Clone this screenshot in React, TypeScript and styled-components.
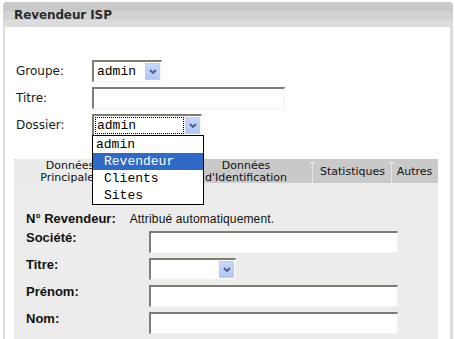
import React from "react";
import styled, { createGlobalStyle } from "styled-components";

const GlobalStyle = createGlobalStyle`
  html, body { margin: 0; padding: 0; background: #fff; }
  body { width: 455px; height: 339px; overflow: hidden; }
`;

const Window = styled.div`
  margin: 2px 2px 0 3px;
  width: 450px;
`;

const Header = styled.div`
  height: 25px;
  border-radius: 4px 4px 0 0;
  background: linear-gradient(
    to bottom,
    #c9c9c9 0px, #c9c9c9 9px,
    #d3d3d3 9px, #d3d3d3 18px,
    #dcdcdc 18px, #dcdcdc 25px
  );
  padding-left: 11px;
  box-sizing: border-box;
  display: flex;
  align-items: center;
`;

const Title = styled.h1`
  margin: 0;
  font-family: "DejaVu Sans", Verdana, sans-serif;
  font-weight: bold;
  font-size: 12px;
  color: #2b2b2b;
  letter-spacing: -0.1px;
`;

const Body = styled.div`
  border-left: 2px solid #dcdcdc;
  border-right: 3px solid #dcdcdc;
  height: 320px;
  box-sizing: border-box;
  padding: 33px 0 0 0;
`;

const TopForm = styled.div`
  display: grid;
  grid-template-columns: 76px auto;
  row-gap: 5px;
  align-items: center;
  padding-left: 11px;
`;

const TopLabel = styled.label`
  font-family: "DejaVu Sans", Verdana, sans-serif;
  font-size: 12px;
  color: #1a1a1a;
`;

const Inset = styled.div<{ $w: number }>`
  width: ${(p) => p.$w}px;
  height: 22px;
  box-sizing: border-box;
  border-style: solid;
  border-width: 2px 1px 1px 2px;
  border-color: #7d7d74 #f2f2f2 #f2f2f2 #7d7d74;
  background: #fff;
`;

const SelectBox = styled(Inset)`
  position: relative;
  display: flex;
  align-items: center;
  padding: 0 1px 0 1px;
  justify-content: space-between;
`;

const SelectText = styled.span<{ $focus?: boolean }>`
  flex: 1;
  align-self: stretch;
  display: flex;
  align-items: center;
  margin: 1px 1px 1px 0;
  padding-left: 2px;
  font-family: "Liberation Mono", "Courier New", monospace;
  font-size: 13px;
  color: #000;
  outline: ${(p) => (p.$focus ? "1px dotted #000" : "none")};
  outline-offset: -1px;
`;

const DropButton = styled.span`
  width: 15px;
  height: 17px;
  box-sizing: border-box;
  background: linear-gradient(to bottom, #c8d8fd, #b3c6f6);
  border: 1px solid #bccdf7;
  display: flex;
  align-items: center;
  justify-content: center;
`;

const DropList = styled.ul`
  position: absolute;
  top: 100%;
  left: -2px;
  width: 112px;
  margin: 0;
  padding: 0;
  list-style: none;
  background: #fff;
  border: 1px solid #000;
  box-sizing: border-box;
  z-index: 5;
`;

const DropItem = styled.li<{ $sel?: boolean; $indent?: boolean }>`
  height: 17px;
  line-height: 17px;
  padding-left: ${(p) => (p.$indent ? 11 : 3)}px;
  font-family: "Liberation Mono", "Courier New", monospace;
  font-size: 13px;
  background: ${(p) => (p.$sel ? "#316ac5" : "#fff")};
  color: ${(p) => (p.$sel ? "#fff" : "#000")};
`;

const Panel = styled.div`
  margin: 23px 12px 0 9px;
`;

const TabBar = styled.div`
  display: flex;
  height: 24px;
  background: #c9c9c9;
`;

const Tab = styled.div<{ $w: number; $active?: boolean; $sep?: boolean }>`
  position: relative;
  width: ${(p) => p.$w}px;
  box-sizing: border-box;
  background: ${(p) => (p.$active ? "#ebebeb" : "transparent")};
  border-radius: ${(p) => (p.$active ? "3px 0 0 0" : "0")};
  display: flex;
  align-items: center;
  justify-content: center;
  text-align: center;
  padding-top: 1px;
  font-family: "DejaVu Sans", Verdana, sans-serif;
  font-size: 11px;
  line-height: 12px;
  color: #111;
  white-space: pre;
  &::before {
    content: "";
    display: ${(p) => (p.$sep ? "block" : "none")};
    position: absolute;
    left: -1px;
    top: 3px;
    bottom: 0;
    width: 1px;
    background: #e6e6e6;
  }
  &::after {
    content: "";
    display: ${(p) => (p.$sep ? "block" : "none")};
    position: absolute;
    left: -3px;
    top: 3px;
    width: 5px;
    height: 2px;
    background: #e2e2e2;
  }
`;

const PanelBody = styled.div`
  background: #ececec;
  height: 160px;
  padding: 29px 0 0 12px;
  box-sizing: border-box;
`;

const InfoRow = styled.div`
  display: flex;
  align-items: baseline;
  gap: 14px;
  height: 15px;
  line-height: 15px;
  margin-bottom: 4px;
`;

const Fields = styled.div`
  display: grid;
  grid-template-columns: 123px auto;
  row-gap: 5px;
  align-items: start;
`;

const FieldLabel = styled.span`
  font-family: "Liberation Sans", Arial, sans-serif;
  font-weight: bold;
  font-size: 13px;
  line-height: 14px;
  color: #111;
`;

const InfoText = styled.span`
  font-family: "Liberation Sans", Arial, sans-serif;
  font-size: 12px;
  letter-spacing: 0.15px;
  color: #111;
`;

const Chevron = () => (
  <svg width="8" height="5" viewBox="0 0 8 5">
    <polyline points="1,1 4,4 7,1" fill="none" stroke="#4a5d82" strokeWidth="1.8" />
  </svg>
);

type SelectProps = { w: number; text?: string; focus?: boolean; children?: React.ReactNode };
const FakeSelect = ({ w, text = "", focus, children }: SelectProps) => (
  <SelectBox $w={w}>
    <SelectText $focus={focus}>{text}</SelectText>
    <DropButton>
      <Chevron />
    </DropButton>
    {children}
  </SelectBox>
);

const tabs = [
  { label: "Données\nPrincipales", w: 112, active: true },
  { label: "", w: 53 },
  { label: "Données\nd'Identification", w: 134 },
  { label: "Statistiques", w: 79, sep: true },
  { label: "Autres", w: 45, sep: true },
];

export default function App() {
  return (
    <>
      <GlobalStyle />
      <Window>
        <Header>
          <Title>Revendeur ISP</Title>
        </Header>
        <Body>
          <TopForm>
            <TopLabel>Groupe:</TopLabel>
            <FakeSelect w={70} text="admin" />
            <TopLabel>Titre:</TopLabel>
            <Inset $w={193} />
            <TopLabel>Dossier:</TopLabel>
            <FakeSelect w={110} text="admin" focus>
              <DropList>
                <DropItem>admin</DropItem>
                <DropItem $sel $indent>Revendeur</DropItem>
                <DropItem $indent>Clients</DropItem>
                <DropItem $indent>Sites</DropItem>
              </DropList>
            </FakeSelect>
          </TopForm>
          <Panel>
            <TabBar>
              {tabs.map((t, i) => (
                <Tab key={i} $w={t.w} $active={t.active} $sep={t.sep}>
                  {t.label}
                </Tab>
              ))}
            </TabBar>
            <PanelBody>
              <InfoRow>
                <FieldLabel>N° Revendeur:</FieldLabel>
                <InfoText>Attribué automatiquement.</InfoText>
              </InfoRow>
              <Fields>
                <FieldLabel>Société:</FieldLabel>
                <Inset $w={249} />
                <FieldLabel>Titre:</FieldLabel>
                <FakeSelect w={87} />
                <FieldLabel>Prénom:</FieldLabel>
                <Inset $w={249} />
                <FieldLabel>Nom:</FieldLabel>
                <Inset $w={249} />
              </Fields>
            </PanelBody>
          </Panel>
        </Body>
      </Window>
    </>
  );
}
